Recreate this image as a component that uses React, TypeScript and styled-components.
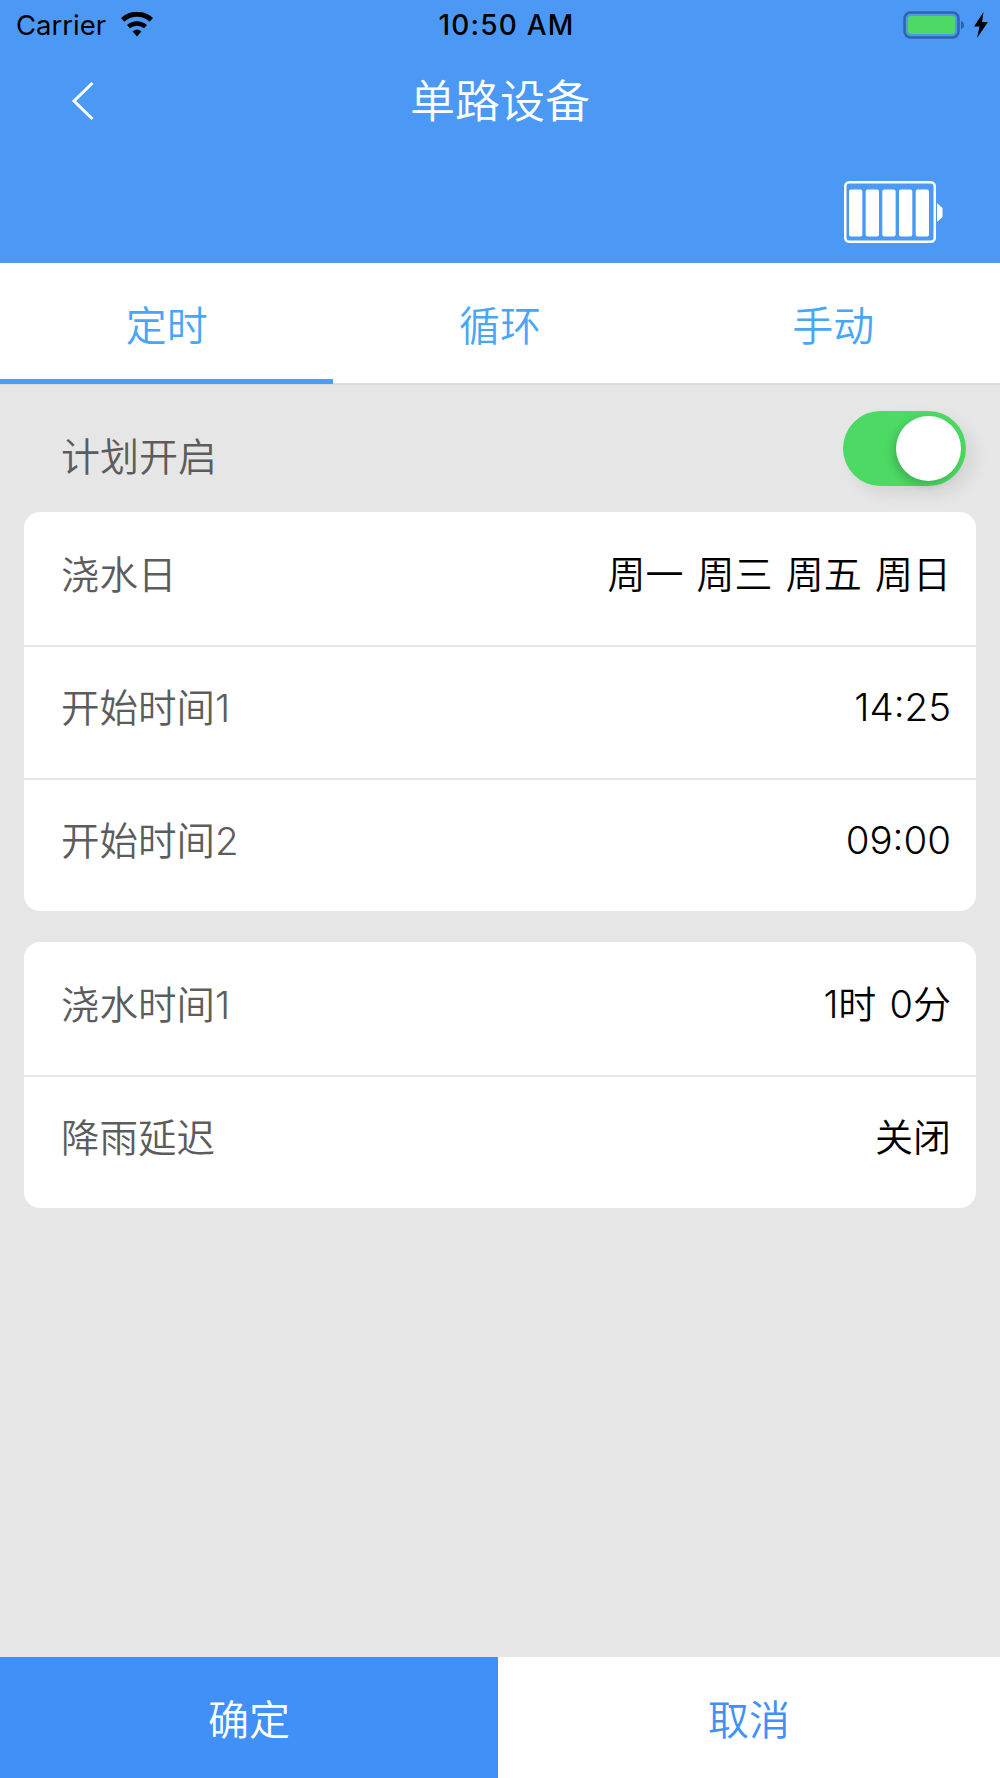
import React from "react";
import styled, { createGlobalStyle } from "styled-components";

const cjk = `Inter, "Noto Sans CJK SC", "Noto Sans", sans-serif`;

const GlobalStyle = createGlobalStyle`
  html, body {
    margin: 0;
    padding: 0;
    background: #e6e6e6;
  }
  * {
    box-sizing: border-box;
  }
`;

const Page = styled.div`
  width: 1000px;
  height: 1778px;
  display: flex;
  flex-direction: column;
  background: #e6e6e6;
  font-family: ${cjk};
  font-weight: 350;
`;

const Header = styled.header`
  height: 263px;
  flex: none;
  background: #4c99f5;
  display: flex;
  flex-direction: column;
`;

const StatusBar = styled.div`
  height: 50px;
  padding: 0 11px 0 16px;
  display: grid;
  grid-template-columns: 1fr auto 1fr;
  align-items: center;
  color: #000;
  font-family: Inter, "Liberation Sans", sans-serif;
  font-weight: 400;
`;

const StatusLeft = styled.div`
  display: flex;
  align-items: center;
  gap: 14px;
  font-size: 27.5px;
`;

const Clock = styled.div`
  margin-left: 8px;
  font-size: 28px;
  font-weight: 500;
  letter-spacing: 1.2px;
`;

const StatusRight = styled.div`
  display: flex;
  justify-content: flex-end;
  align-items: center;
  gap: 8px;
`;

const NavBar = styled.div`
  height: 102px;
  padding: 0 0 0 71px;
  position: relative;
  display: flex;
  align-items: center;
`;

const NavTitle = styled.h1`
  position: absolute;
  left: 0;
  right: 0;
  margin: 0;
  text-align: center;
  font-size: 45px;
  font-weight: 350;
  color: #fff;
  line-height: 1;
`;

const HeaderBottom = styled.div`
  display: flex;
  justify-content: flex-end;
  padding: 29px 56px 0 0;
`;

const Tabs = styled.nav`
  height: 122px;
  flex: none;
  background: #fff;
  display: flex;
  border-bottom: 2px solid #dcdcdc;
`;

const Tab = styled.div<{ $active?: boolean }>`
  flex: 1;
  margin-bottom: -1px;
  display: flex;
  align-items: center;
  justify-content: center;
  padding-top: 4px;
  font-size: 41px;
  color: #48a6f7;
  border-bottom: 5px solid ${(p) => (p.$active ? "#4a9ef5" : "transparent")};
`;

const Content = styled.main`
  flex: 1;
  padding: 0 24px;
  display: flex;
  flex-direction: column;
`;

const PlanRow = styled.div`
  height: 127px;
  padding: 0 10px 0 37px;
  display: flex;
  align-items: center;
  justify-content: space-between;
`;

const PlanLabel = styled.span`
  font-size: 39px;
  color: #5c5c5c;
  margin-top: 10px;
`;

const Toggle = styled.div`
  width: 123px;
  height: 75px;
  border-radius: 38px;
  background: #4cd964;
  position: relative;
  margin-top: -1px;
  box-shadow: 8px 8px 16px rgba(0, 0, 0, 0.08);
`;

const Knob = styled.div`
  position: absolute;
  top: 5px;
  right: 5px;
  width: 65px;
  height: 65px;
  border-radius: 50%;
  background: #fff;
  box-shadow: -3px 4px 8px rgba(0, 0, 0, 0.18);
`;

const Card = styled.section`
  background: #fff;
  border-radius: 16px;
  margin-bottom: 31px;
  overflow: hidden;
`;

const Row = styled.div`
  height: 133px;
  padding: 0 25px 16px 37px;
  display: flex;
  align-items: center;
  justify-content: space-between;
  border-top: 2px solid #e6e6e6;

  &:first-child {
    border-top: none;
    padding-bottom: 14px;
  }
`;

const RowLabel = styled.span`
  font-size: 38.5px;
  color: #5c5c5c;
`;

const RowValue = styled.span<{ $digits?: boolean }>`
  font-size: ${(p) => (p.$digits ? "38.5px" : "38px")};
  color: #000;
  word-spacing: 2.5px;
  margin-top: ${(p) => (p.$digits ? "4px" : "0")};
`;

const Footer = styled.footer`
  height: 121px;
  flex: none;
  display: flex;
`;

const FooterButton = styled.button<{ $primary?: boolean }>`
  flex: ${(p) => (p.$primary ? "0 0 498px" : "1")};
  border: none;
  padding: 0 0 2px;
  font-family: ${cjk};
  font-weight: 350;
  font-size: 41px;
  background: ${(p) => (p.$primary ? "#4090f8" : "#fff")};
  color: ${(p) => (p.$primary ? "#fff" : "#4090f8")};
`;

const WifiIcon = () => (
  <svg width="34" height="26" viewBox="0 0 34 26">
    <path d="M17 24.500 12.600 19.400a7 7 0 0 1 8.800 0Z" fill="#000" />
    <path d="M9.900 16.300 7 13a15.400 15.400 0 0 1 20 0l-2.900 3.300a11 11 0 0 0-14.200 0Z" fill="#000" />
    <path d="M4.300 9.800 1 6a23.500 23.500 0 0 1 32 0l-3.300 3.800a18.700 18.700 0 0 0-25.400 0Z" fill="#000" />
  </svg>
);

const StatusBattery = () => (
  <svg width="62" height="28" viewBox="0 0 62 28">
    <rect x="1.500" y="1.500" width="54" height="25" rx="6" fill="none" stroke="#2f64a6" strokeWidth="2.500" />
    <rect x="5" y="5" width="47" height="18" rx="3" fill="#4cd964" />
    <path d="M58 10c2 .6 3 2 3 4s-1 3.400-3 4Z" fill="#2f64a6" />
  </svg>
);

const Bolt = () => (
  <svg width="16" height="26" viewBox="0 0 16 26">
    <path d="M10.500 0 1 14.500h5.500L4 26l11-16H9Z" fill="#000" />
  </svg>
);

const BackIcon = () => (
  <svg width="24" height="40" viewBox="0 0 24 40">
    <path d="M21.500 2 3 20l18.500 18" fill="none" stroke="#fff" strokeWidth="3" />
  </svg>
);

const DeviceBattery = () => (
  <svg width="100" height="62" viewBox="0 0 100 62">
    <rect x="1.250" y="1.250" width="89.500" height="59.500" rx="4" fill="none" stroke="#fff" strokeWidth="2.500" />
    {[5, 21.700, 38.300, 55, 71.700].map((x) => (
      <rect key={x} x={x} y="8.500" width="13.300" height="47" rx="2" fill="#fff" />
    ))}
    <path d="M93 22l5.500 5v9l-5.500 5Z" fill="#fff" />
  </svg>
);

export default function App() {
  return (
    <Page>
      <GlobalStyle />
      <Header>
        <StatusBar>
          <StatusLeft>
            Carrier
            <WifiIcon />
          </StatusLeft>
          <Clock>10:50 AM</Clock>
          <StatusRight>
            <StatusBattery />
            <Bolt />
          </StatusRight>
        </StatusBar>
        <NavBar>
          <BackIcon />
          <NavTitle>单路设备</NavTitle>
        </NavBar>
        <HeaderBottom>
          <DeviceBattery />
        </HeaderBottom>
      </Header>

      <Tabs>
        <Tab $active>定时</Tab>
        <Tab>循环</Tab>
        <Tab>手动</Tab>
      </Tabs>

      <Content>
        <PlanRow>
          <PlanLabel>计划开启</PlanLabel>
          <Toggle>
            <Knob />
          </Toggle>
        </PlanRow>
        <Card>
          <Row>
            <RowLabel>浇水日</RowLabel>
            <RowValue>周一 周三 周五 周日</RowValue>
          </Row>
          <Row>
            <RowLabel>开始时间1</RowLabel>
            <RowValue $digits>14:25</RowValue>
          </Row>
          <Row>
            <RowLabel>开始时间2</RowLabel>
            <RowValue $digits>09:00</RowValue>
          </Row>
        </Card>
        <Card>
          <Row>
            <RowLabel>浇水时间1</RowLabel>
            <RowValue>1时 0分</RowValue>
          </Row>
          <Row>
            <RowLabel>降雨延迟</RowLabel>
            <RowValue>关闭</RowValue>
          </Row>
        </Card>
      </Content>

      <Footer>
        <FooterButton $primary>确定</FooterButton>
        <FooterButton>取消</FooterButton>
      </Footer>
    </Page>
  );
}
